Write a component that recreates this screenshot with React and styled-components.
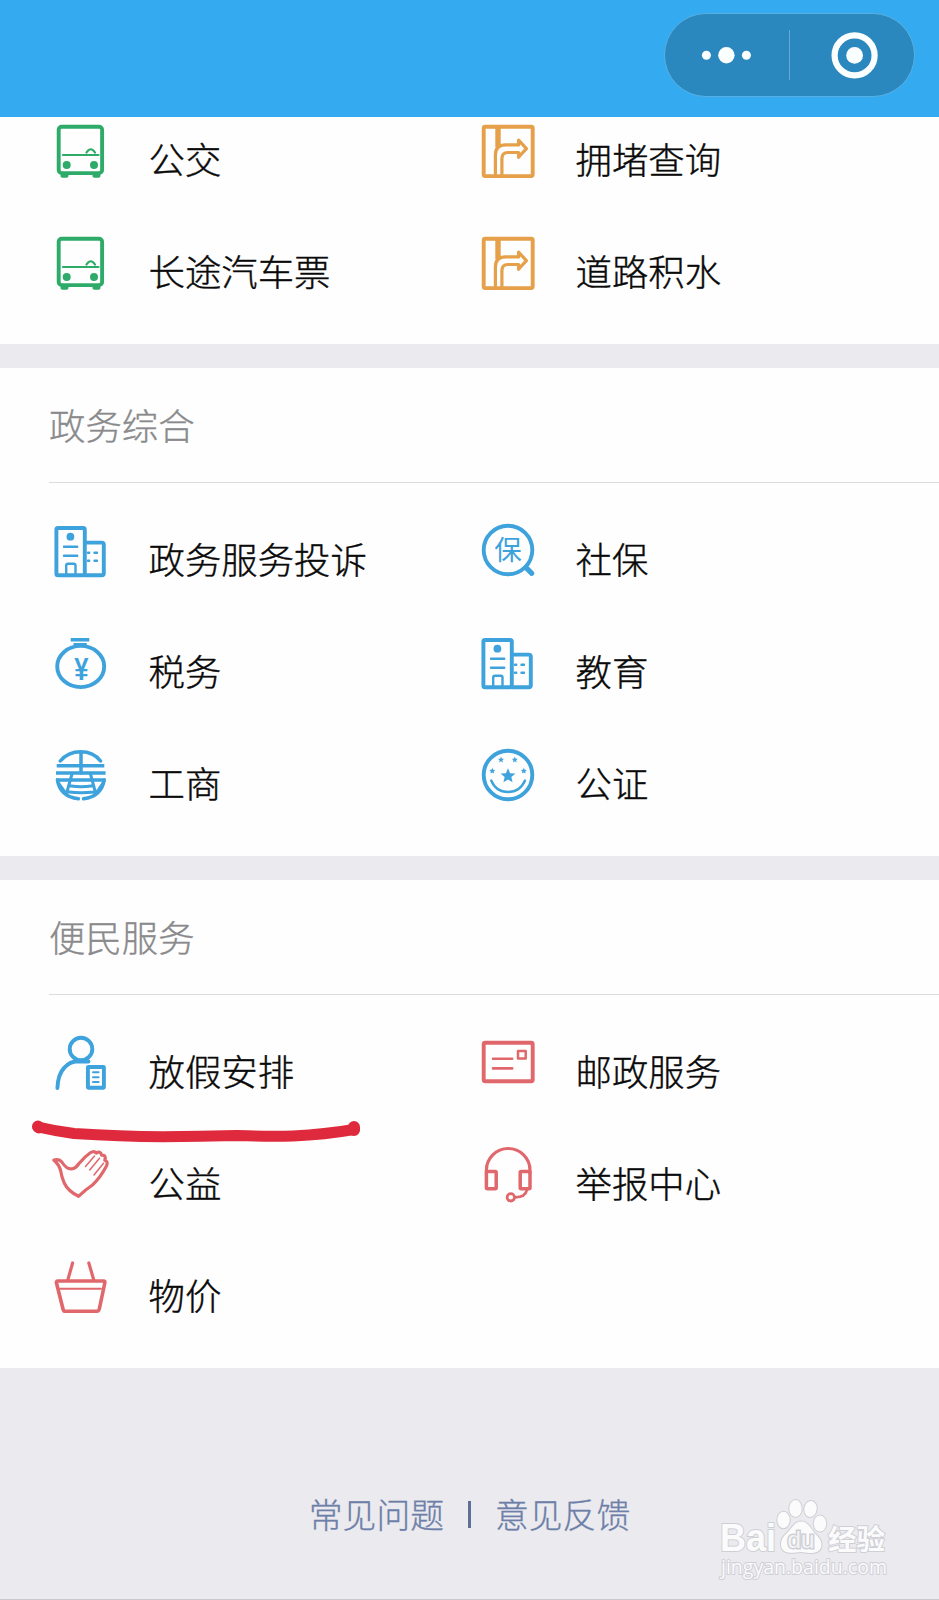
import React from "react";
import styled, { createGlobalStyle } from "styled-components";

const GlobalStyle = createGlobalStyle`
  body { margin: 0; background: #ebeaee; }
  * { box-sizing: border-box; }
`;

const Page = styled.div`
  position: relative;
  display: flex;
  flex-direction: column;
  width: 939px;
  height: 1600px;
  overflow: hidden;
  background: #ebeaee;
  border-bottom: 1px solid #c9c9d2;
  font-family: "Noto Sans CJK SC", sans-serif;
  font-weight: 300;
`;

const Header = styled.header`
  display: flex;
  flex: none;
  justify-content: flex-end;
  height: 117px;
  padding: 13px 24px 0 0;
  background: #34abf1;
`;

const Capsule = styled.div`
  display: flex;
  align-items: center;
  width: 251px;
  height: 84px;
  border: 1.5px solid #58afe2;
  border-radius: 42px;
  background: #2b88bf;
`;

const CapsuleButton = styled.button`
  display: flex;
  flex: 1;
  align-items: center;
  justify-content: center;
  padding: 0;
  border: 0;
  background: none;
`;

const CapsuleDivider = styled.span`
  width: 1px;
  height: 50px;
  background: #64a9d4;
`;

const Section = styled.section`
  flex: none;
  margin-bottom: 24px;
  background: #fefefe;
`;

const SectionTitle = styled.h2`
  display: flex;
  align-items: center;
  height: 114.5px;
  margin: 0 0 0 49px;
  padding-bottom: 1px;
  border-bottom: 1px solid #dcdcde;
  color: #8a8a8c;
  font-size: 36.4px;
  font-weight: 300;
  line-height: 52px;
  -webkit-text-stroke: 0.35px currentColor;
`;

const ServiceGrid = styled.div`
  display: grid;
  grid-template-columns: 427px 427px;
  grid-auto-rows: 54px;
  row-gap: 58px;
  padding: ${(p) => p.$top}px 0 54px 53px;
`;

const Service = styled.div`
  display: flex;
  gap: 41.5px;
  color: ${(p) => p.$color};
`;

const ServiceIcon = styled.svg`
  flex: none;
  width: 54px;
  height: 54px;
  overflow: visible;
  fill: none;
  stroke: currentColor;
  stroke-width: 3.9px;
  stroke-linecap: round;
  stroke-linejoin: round;
`;

const ServiceLabel = styled.span`
  padding-top: 7px;
  color: #0a0a0a;
  font-size: 36.4px;
  line-height: 54px;
  white-space: nowrap;
  -webkit-text-stroke: 0.4px currentColor;
`;

const Footer = styled.footer`
  display: flex;
  align-items: center;
  justify-content: center;
  height: 48px;
  margin-top: 98px;
  gap: 24px;
`;

const FooterLink = styled.a`
  color: #6d7fa8;
  font-size: 33.8px;
  line-height: 48px;
  -webkit-text-stroke: 0.3px currentColor;
`;

const FooterDivider = styled.span`
  width: 3px;
  height: 27px;
  background: #5f6f99;
`;

const Underline = styled.svg`
  position: absolute;
  left: 30px;
  top: 1115px;
  width: 335px;
  height: 32px;
  fill: none;
  stroke: #df293d;
  stroke-linecap: round;
  stroke-linejoin: round;
`;

const Watermark = styled.svg`
  position: absolute;
  left: 715px;
  top: 1494px;
  width: 180px;
  height: 92px;
  overflow: visible;
  fill: #fbfbfc;
  stroke: #cfcfd6;
  stroke-width: 2px;
  paint-order: stroke;
`;

const star = (cx, cy, r) =>
  Array.from({ length: 10 }, (_, i) => {
    const a = -Math.PI / 2 + (i * Math.PI) / 5;
    const d = i % 2 ? r * 0.45 : r;
    return `${cx + d * Math.cos(a)},${cy + d * Math.sin(a)}`;
  }).join(" ");

const icons = {
  bus: (
    <>
      <rect x="5.7" y="2.7" width="43.4" height="46.4" rx="3" />
      <path d="M10 31H45.5M33.5 28.5Q37.7 22 42 28.5" strokeWidth="2.2" />
      <path d="M9.5 51.7H13.5M41.5 51.7H45.5" strokeWidth="4.2" />
      <circle cx="13.7" cy="41" r="4" fill="currentColor" stroke="none" />
      <circle cx="41" cy="41" r="4" fill="currentColor" stroke="none" />
    </>
  ),
  road: (
    <>
      <rect x="3.7" y="2.7" width="49" height="49.4" rx="1.5" />
      <path d="M18 4V23" strokeWidth="5.4" strokeLinecap="butt" />
      <path
        d="M15.4 51V31Q15.4 20.9 25.5 20.9H38.6V16.2L46.4 24.7L38.6 33.2V28.5H28Q21.9 28.5 21.9 34.5V51"
        strokeWidth="3.2"
      />
    </>
  ),
  building: (
    <>
      <rect x="3.4" y="4" width="28.4" height="47.3" rx="1.6" />
      <path d="M32 18.6H48.8Q50.8 18.6 50.8 20.6V49.3Q50.8 51.3 48.8 51.3H32" />
      <circle cx="17.4" cy="12.7" r="3.9" fill="currentColor" stroke="none" />
      <path
        d="M11 22.8H24.2M11 31.8H24.2M13.2 51V41.5Q13.2 39.8 15 39.8H20.8Q22.5 39.8 22.5 41.5V51M35 28.8H36.2M41.5 28.8H44M35 36.8H36.2M41.5 36.8H44"
        strokeWidth="2.4"
      />
    </>
  ),
  insurance: (
    <>
      <circle cx="28" cy="26" r="24.3" />
      <path d="M46 43.7L51.8 49.3" strokeWidth="5.2" />
      <text x="28" y="35.6" textAnchor="middle" fontSize="27.5" fontWeight="400" fill="currentColor" stroke="none">
        保
      </text>
    </>
  ),
  tax: (
    <>
      <path d="M17.7 3.7H36.3M20.5 8.6H33.7" strokeLinecap="butt" strokeWidth="3.4" />
      <ellipse cx="27.7" cy="30.5" rx="23.5" ry="20.6" />
      <text
        transform="translate(28.3 43.7) scale(0.8 1)"
        textAnchor="middle"
        fontFamily="Liberation Sans, sans-serif"
        fontSize="32"
        fontWeight="700"
        fill="currentColor"
        stroke="none"
      >
        ¥
      </text>
    </>
  ),
  commerce: (
    <>
      <path d="M7.3 13Q15 3.8 27.7 3.8Q40.5 3.8 47.5 13M28 4V25" strokeWidth="3.5" />
      <path d="M3.7 17.7H51.3M3 25H52.6M3 32H52.6" strokeWidth="3.4" strokeLinecap="butt" />
      <path d="M4.4 32Q7 48.5 25.4 50.8M51.2 32Q48.5 48.5 30.5 50.8" strokeWidth="3.5" />
      <path
        d="M19 26L13.5 45.5M37.5 26L42.7 45.5M5.5 35L13 45.5M50 35L43 45.5M18 37.9Q28 39.5 38.5 37.9M16 44Q28 45.5 41 44"
        strokeWidth="3"
      />
    </>
  ),
  notary: (
    <>
      <circle cx="28" cy="27" r="24.3" />
      <path d="M11.2 32.5Q16 44 28 44Q40 44 45 32.5" strokeWidth="2.4" />
      <g fill="currentColor" stroke="none">
        <polygon points={star(28, 28, 7.8)} />
        <polygon points={star(21, 11.8, 3.2)} />
        <polygon points={star(34.8, 11.8, 3.2)} />
        <polygon points={star(12.3, 23, 3.2)} />
        <polygon points={star(43.8, 23, 3.2)} />
      </g>
    </>
  ),
  holiday: (
    <>
      <circle cx="28" cy="13" r="11.3" />
      <path d="M4.4 52Q5 38 11.5 31.5Q17 25.5 24.5 25.3L35.5 25.5" />
      <rect x="34.9" y="31" width="16" height="20.8" rx="0.5" />
      <path d="M40 36.3H45.6M40 41.2H45.6M40 46H45.6" strokeWidth="2" />
    </>
  ),
  charity: (
    <>
      <path
        d="M.8 12Q6 10.5 8.8 14Q14 22 19.5 20.8Q23 20 26 15.5Q32 8.500 37.3 4.8Q41 2.3 43.2 5Q47.5 2.6 48.6 7.2Q53.5 6.6 51.8 12.2Q55.5 13.5 53.5 18Q47 30 39.5 37Q32 42 25.5 48.3Q15 43 11.2 35Q8.5 28.5 7.6 22.5Q6 16.500 .8 12Z"
        strokeWidth="3.2"
      />
      <path d="M41.5 8L32.5 18.5M46.500 10.3L36.7 22M50.500 15.2L41 27" strokeWidth="1.5" />
    </>
  ),
  price: (
    <>
      <path d="M19.6 3L14.8 20M35.8 3L40.8 20" strokeWidth="3.2" />
      <path
        d="M5 21H50.5Q52.4 21 51.8 23L46.3 49Q45.8 51.2 43.8 51.2H12.2Q10.5 51.2 10 49L3.5 23Q3 21 5 21Z"
        strokeWidth="3.6"
      />
      <path d="M7 28.7H48" strokeWidth="2" />
    </>
  ),
  mail: (
    <>
      <rect x="3.7" y="6.8" width="49" height="38.4" rx="1.5" />
      <path d="M13 22.7H32.2M13 32.4H32.2" strokeWidth="2.6" />
      <rect x="38" y="14.9" width="7.7" height="7.7" strokeWidth="2.5" />
    </>
  ),
  headset: (
    <>
      <path d="M6.4 25V22.3A21.800 21.800 0 0 1 50 22.3V25" strokeWidth="3.2" />
      <rect x="6.4" y="23.6" width="9.8" height="17.2" rx="1" strokeWidth="3.5" />
      <rect x="40.2" y="23.6" width="9.8" height="17.2" rx="1" strokeWidth="3.5" />
      <path d="M46.900 42Q45.2 49.3 35.4 49.3" strokeWidth="2.8" />
      <circle cx="30.8" cy="49.3" r="3.7" strokeWidth="2.8" />
    </>
  ),
};

const green = "#2fab69";
const orange = "#e5a049";
const blue = "#3ea2dc";
const red = "#e0686c";

const sections = [
  {
    items: [
      ["bus", green, "公交"],
      ["road", orange, "拥堵查询"],
      ["bus", green, "长途汽车票"],
      ["road", orange, "道路积水"],
    ],
  },
  {
    title: "政务综合",
    items: [
      ["building", blue, "政务服务投诉"],
      ["insurance", blue, "社保"],
      ["tax", blue, "税务"],
      ["building", blue, "教育"],
      ["commerce", blue, "工商"],
      ["notary", blue, "公证"],
    ],
  },
  {
    title: "便民服务",
    items: [
      ["holiday", blue, "放假安排"],
      ["mail", red, "邮政服务"],
      ["charity", red, "公益"],
      ["headset", red, "举报中心"],
      ["price", red, "物价"],
    ],
  },
];

export default function App() {
  return (
    <Page>
      <GlobalStyle />
      <Header>
        <Capsule>
          <CapsuleButton aria-label="更多">
            <svg width="52" height="18" viewBox="0 0 52 18" fill="#fbffff">
              <circle cx="5.4" cy="9.3" r="4.5" />
              <circle cx="25.4" cy="9.3" r="8.2" />
              <circle cx="45.4" cy="9.3" r="4.5" />
            </svg>
          </CapsuleButton>
          <CapsuleDivider />
          <CapsuleButton aria-label="关闭">
            <svg width="54" height="48" viewBox="0 0 54 48">
              <circle cx="29.600" cy="24.400" r="20" fill="none" stroke="#fbffff" strokeWidth="6.2" />
              <circle cx="29.600" cy="24.400" r="8.4" fill="#fbffff" />
            </svg>
          </CapsuleButton>
        </Capsule>
      </Header>
      {sections.map(({ title, items }, i) => (
        <Section key={i}>
          {title && <SectionTitle>{title}</SectionTitle>}
          <ServiceGrid $top={title ? 41.5 : 7}>
            {items.map(([icon, color, label]) => (
              <Service key={label} $color={color}>
                <ServiceIcon viewBox="0 0 54 54">{icons[icon]}</ServiceIcon>
                <ServiceLabel>{label}</ServiceLabel>
              </Service>
            ))}
          </ServiceGrid>
        </Section>
      ))}
      <Footer>
        <FooterLink>常见问题</FooterLink>
        <FooterDivider />
        <FooterLink>意见反馈</FooterLink>
      </Footer>
      <Underline viewBox="30 1115 335 32">
        <path
          d="M38 1127Q55 1131 74 1133.5Q120 1136.5 163 1136.8Q200 1136.5 237 1135.5Q270 1136.8 293 1136Q325 1134.5 354 1129.5"
          strokeWidth="11"
        />
        <path d="M38 1126.5L39 1127.5M354 1127V1130" strokeWidth="12" />
      </Underline>
      <Watermark viewBox="0 0 180 92">
        <text
          x="5"
          y="57"
          fontFamily="Liberation Sans, sans-serif"
          fontWeight="700"
          fontSize="38"
          textLength="56"
          lengthAdjust="spacingAndGlyphs"
        >
          Bai
        </text>
        <ellipse cx="68.5" cy="26" rx="6.2" ry="8.3" />
        <ellipse cx="80.5" cy="14.5" rx="6.2" ry="8.5" />
        <ellipse cx="95.5" cy="15" rx="6.2" ry="8" transform="rotate(8 95.5 15)" />
        <ellipse cx="105" cy="29.5" rx="6.2" ry="8" />
        <path d="M86 27.500C94 27.500 96 36 101.500 41C109 48 108 58 98 59C93 59.500 90 58 86 58C81 58 78 59.500 73 58.500C64 57 64 46 71 40C77 35 79 27.500 86 27.500Z" />
        <text
          x="72.5"
          y="53.5"
          fontFamily="Liberation Sans, sans-serif"
          fontWeight="400"
          fontSize="24"
          textLength="27"
          lengthAdjust="spacingAndGlyphs"
          fill="#f3f3f5"
          strokeWidth="3"
        >
          du
        </text>
        <text x="113" y="56" fontWeight="700" fontSize="28.5" textLength="57">
          经验
        </text>
        <text
          x="6"
          y="79.5"
          fontFamily="Open Sans, sans-serif"
          fontWeight="400"
          fontSize="20.5"
          textLength="166"
          lengthAdjust="spacingAndGlyphs"
        >
          jingyan.baidu.com
        </text>
      </Watermark>
    </Page>
  );
}
